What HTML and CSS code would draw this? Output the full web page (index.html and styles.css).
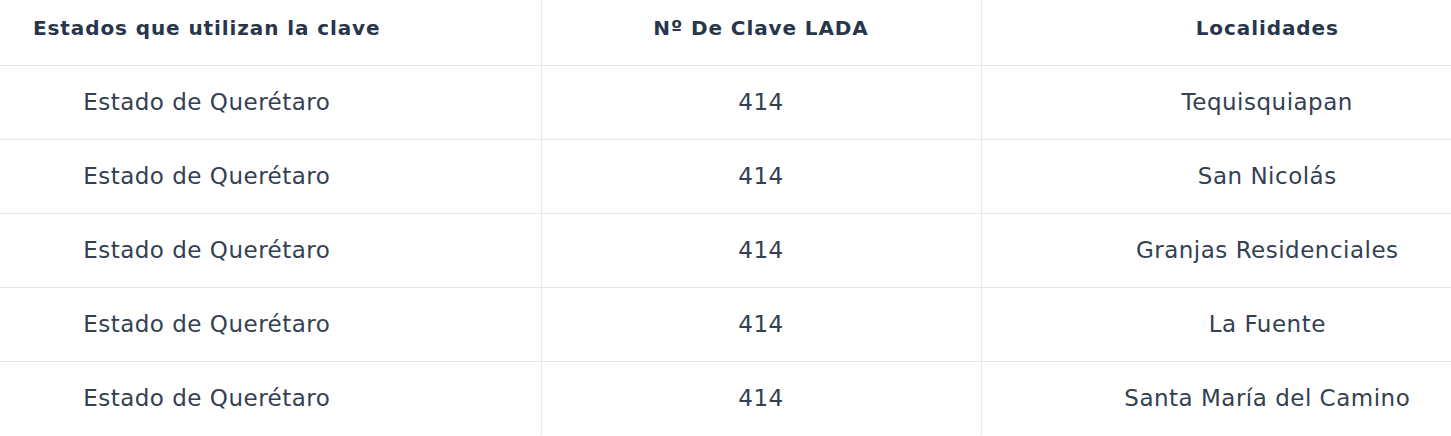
FILE: index.html
```html
<!DOCTYPE html>
<html lang="es">
<head>
<meta charset="utf-8">
<title>Clave LADA 414</title>
<link rel="stylesheet" href="styles.css">
</head>
<body>
<table class="lada">
  <thead>
    <tr>
      <th class="c1">Estados que utilizan la clave</th>
      <th class="c2">Nº De Clave LADA</th>
      <th class="c3">Localidades</th>
    </tr>
  </thead>
  <tbody>
    <tr><td class="c1">Estado de Querétaro</td><td class="c2">414</td><td class="c3">Tequisquiapan</td></tr>
    <tr><td class="c1">Estado de Querétaro</td><td class="c2">414</td><td class="c3">San Nicolás</td></tr>
    <tr><td class="c1">Estado de Querétaro</td><td class="c2">414</td><td class="c3">Granjas Residenciales</td></tr>
    <tr><td class="c1">Estado de Querétaro</td><td class="c2">414</td><td class="c3">La Fuente</td></tr>
    <tr><td class="c1">Estado de Querétaro</td><td class="c2">414</td><td class="c3">Santa María del Camino</td></tr>
  </tbody>
</table>
</body>
</html>
```
FILE: styles.css
```css
html, body {
  margin: 0;
  padding: 0;
  background: #ffffff;
}
body {
  font-family: "DejaVu Sans", "Open Sans", sans-serif;
  color: #334052;
  overflow: hidden;
}
.lada {
  width: 1451px;
  border-collapse: collapse;
  table-layout: fixed;
}
.lada th,
.lada td {
  text-align: center;
  border-bottom: 1px solid #e3e7ec;
  padding: 0;
  white-space: nowrap;
}
.lada tbody tr:last-child td {
  border-bottom: none;
}
.lada th {
  height: 65px;
  font-size: 20px;
  letter-spacing: 0.9px;
  font-weight: 700;
  color: #28364b;
  padding-bottom: 8px;
  box-sizing: border-box;
}
.lada td {
  height: 73px;
  font-size: 23px;
  letter-spacing: 0.5px;
  font-weight: 400;
}
.lada .c1 { width: 541px; padding-right: 127px; box-sizing: border-box; }
.lada .c2 { width: 440px; border-left: 1px solid #e3e7ec; border-right: 1px solid #e3e7ec; }
.lada .c3 { width: 470px; padding-left: 102px; box-sizing: border-box; }
```
